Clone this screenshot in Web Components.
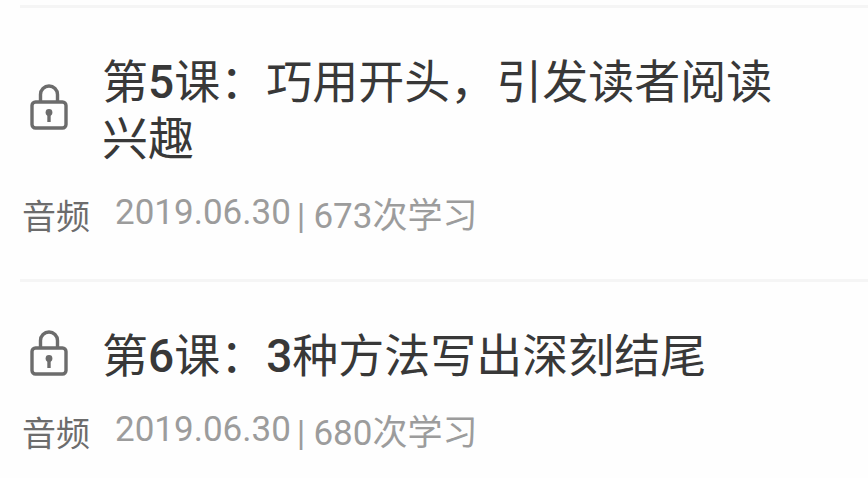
<!DOCTYPE html>
<html lang="zh-CN">
<head>
<meta charset="utf-8">
<meta name="viewport" content="width=device-width, initial-scale=1">
<title>课程列表</title>
<style>
body{margin:0;background:#fefefe;font-family:Roboto,"Noto Sans CJK SC",sans-serif}
b{font-weight:500}
</style>
</head>
<body>
<lesson-list>
  <lesson-item>
    <span slot="title">第<b>5</b>课：巧用开头，引发读者阅读兴趣</span>
    <span slot="kind">音频</span>
    <time slot="date" datetime="2019-06-30">2019.06.30</time>
    <span slot="count">673次学习</span>
  </lesson-item>
  <lesson-item>
    <span slot="title">第<b>6</b>课：<b>3</b>种方法写出深刻结尾</span>
    <span slot="kind">音频</span>
    <time slot="date" datetime="2019-06-30">2019.06.30</time>
    <span slot="count">680次学习</span>
  </lesson-item>
</lesson-list>
<script>
class LockIcon extends HTMLElement {
  constructor() {
    super();
    this.attachShadow({mode: 'open'}).innerHTML = `
      <style>
        :host{display:block;flex:none;width:38px;height:46px;color:#6c6c6c}
        svg{display:block;width:100%;height:100%}
      </style>
      <svg viewBox="0 0 38 46" fill="none" stroke="currentColor" stroke-width="3.400" aria-hidden="true">
        <rect x="2" y="18" width="34" height="26" rx="3.500"/>
        <path d="M10.500 18V10.500a8.500 8.500 0 0 1 17 0V18"/>
        <circle cx="19" cy="28.500" r="3.400" fill="currentColor" stroke="none"/>
        <path d="M19 29v9"/>
      </svg>`;
  }
}
customElements.define('lock-icon', LockIcon);

class LessonItem extends HTMLElement {
  constructor() {
    super();
    this.attachShadow({mode: 'open'}).innerHTML = `
      <style>
        :host{display:block;border-top:3px solid #f5f5f5;padding:46px 80px 42px 0}
        :host(:last-of-type){padding-bottom:16px}
        .head{display:flex;align-items:center;gap:34px;padding-left:10px}
        lock-icon{margin-bottom:8px}
        h2{margin:0;flex:1;font-size:46px;line-height:57px;font-weight:400;color:#383838}
        .meta{display:flex;margin-top:29px;padding-left:2px;font-size:35px;line-height:40px;color:#9c9c9c}
        .kind{font-size:34px;color:#6c6c6c;margin-right:25px}
        .date{margin-right:6px;line-height:32px}
        .bar{margin-right:8px}
      </style>
      <div class="head"><lock-icon></lock-icon><h2><slot name="title"></slot></h2></div>
      <div class="meta">
        <span class="kind"><slot name="kind"></slot></span>
        <span class="date"><slot name="date"></slot></span>
        <span class="bar">|</span>
        <span class="count"><slot name="count"></slot></span>
      </div>`;
  }
}
customElements.define('lesson-item', LessonItem);

class LessonList extends HTMLElement {
  constructor() {
    super();
    this.attachShadow({mode: 'open'}).innerHTML = `
      <style>:host{display:block;padding:5px 0 0 20px}</style>
      <slot></slot>`;
  }
}
customElements.define('lesson-list', LessonList);
</script>
</body>
</html>
